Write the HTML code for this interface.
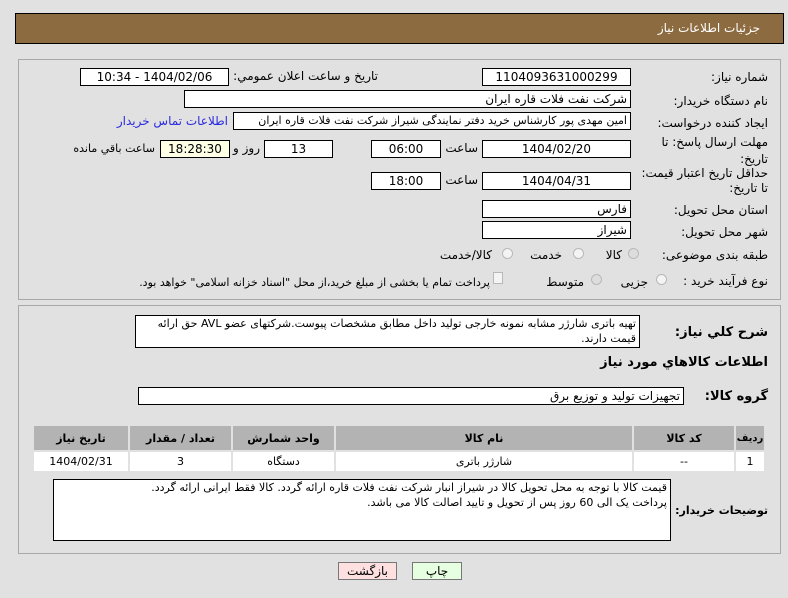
<!DOCTYPE html>
<html><head><meta charset="utf-8"><style>
body{margin:0;width:788px;height:598px;background:#e1e1e1;font-family:"DejaVu Sans","Noto Sans CJK SC",sans-serif;font-size:12px;color:#000;position:relative;overflow:hidden}
.a{position:absolute;white-space:nowrap}
.box{position:absolute;background:#fff;border:1px solid #000;box-sizing:border-box;height:18px;line-height:16px;text-align:center;font-size:12px;direction:rtl;overflow:hidden;white-space:nowrap}
.l{text-align:right;padding-right:3px}
.lab{position:absolute;direction:rtl;text-align:right;white-space:nowrap}
.panel{position:absolute;border:1px solid #a8a8a8;box-sizing:border-box;background:#e1e1e1}
.r{position:absolute;width:11px;height:11px;border-radius:50%;border:1px solid #b8b8b8;background:#f4f4f4;box-sizing:border-box}
table{position:absolute;border-collapse:collapse;left:32px;top:424px;width:734px}
td,th{border:2px solid #e1e1e1;text-align:center;font-size:11px;padding:0}
th{background:#b3b3b3;height:24px;font-weight:bold}
td{background:#fff;height:19px}
.s{font-size:11px}
</style></head><body>
<div class="a" style="left:15px;top:13px;width:769px;height:31px;background:#8d6b40;border:1px solid #000;box-sizing:border-box"></div>
<div class="lab" style="right:28px;top:21px;color:#fff">جزئیات اطلاعات نیاز</div>

<div class="panel" style="left:18px;top:59px;width:763px;height:241px"></div>
<div class="lab" style="right:20px;top:70px">شماره نیاز:</div>
<div class="box" style="left:482px;top:68px;width:149px">1104093631000299</div>
<div class="lab" style="right:410px;top:69px">تاریخ و ساعت اعلان عمومي:</div>
<div class="box" style="left:80px;top:68px;width:149px">1404/02/06 - 10:34</div>

<div class="lab" style="right:20px;top:94px">نام دستگاه خریدار:</div>
<div class="box l" style="left:184px;top:90px;width:447px">شرکت نفت فلات قاره ایران</div>

<div class="lab" style="right:20px;top:116px">ایجاد کننده درخواست:</div>
<div class="box l s" style="left:233px;top:112px;width:398px;letter-spacing:-0.3px">امین مهدی پور کارشناس خرید دفتر نمایندگی شیراز شرکت نفت فلات قاره ایران</div>
<div class="lab" style="right:560px;top:114px;color:#2a2ae0">اطلاعات تماس خریدار</div>

<div class="lab" style="right:20px;top:134px;line-height:17px">مهلت ارسال پاسخ: تا<br>تاریخ:</div>
<div class="box" style="left:482px;top:140px;width:149px">1404/02/20</div>
<div class="lab" style="right:310px;top:141px">ساعت</div>
<div class="box" style="left:371px;top:140px;width:70px">06:00</div>
<div class="box" style="left:264px;top:140px;width:69px">13</div>
<div class="lab" style="right:528px;top:141px">روز و</div>
<div class="box" style="left:160px;top:140px;width:70px;background:#ffffe6">18:28:30</div>
<div class="lab s" style="right:633px;top:142px">ساعت باقي مانده</div>

<div class="lab" style="right:20px;top:166px;line-height:15px;letter-spacing:-0.4px">حداقل تاریخ اعتبار قیمت:<br>تا تاریخ:</div>
<div class="box" style="left:482px;top:172px;width:149px">1404/04/31</div>
<div class="lab" style="right:310px;top:173px">ساعت</div>
<div class="box" style="left:371px;top:172px;width:70px">18:00</div>

<div class="lab" style="right:20px;top:203px">استان محل تحویل:</div>
<div class="box l" style="left:482px;top:200px;width:149px">فارس</div>
<div class="lab" style="right:20px;top:225px">شهر محل تحویل:</div>
<div class="box l" style="left:482px;top:221px;width:149px">شیراز</div>

<div class="lab" style="right:20px;top:248px">طبقه بندی موضوعی:</div>
<div class="r" style="left:628px;top:248px;background:#ddd"></div>
<div class="lab" style="right:166px;top:248px">کالا</div>
<div class="r" style="left:573px;top:248px"></div>
<div class="lab" style="right:226px;top:248px">خدمت</div>
<div class="r" style="left:502px;top:248px"></div>
<div class="lab" style="right:296px;top:248px">کالا/خدمت</div>

<div class="lab" style="right:20px;top:274px">نوع فرآیند خرید :</div>
<div class="r" style="left:656px;top:274px"></div>
<div class="lab" style="right:140px;top:275px">جزیی</div>
<div class="r" style="left:591px;top:274px;background:#ddd"></div>
<div class="lab" style="right:204px;top:275px">متوسط</div>
<div class="a" style="left:493px;top:272px;width:10px;height:12px;border:1px solid #b8b8b8;background:#f4f4f4;box-sizing:border-box"></div>
<div class="lab s" style="right:298px;top:276px">پرداخت تمام یا بخشی از مبلغ خرید،از محل "اسناد خزانه اسلامی" خواهد بود.</div>

<div class="panel" style="left:18px;top:305px;width:763px;height:249px"></div>
<div class="lab" style="right:20px;top:325px;font-weight:bold;font-size:13px">شرح کلي نیاز:</div>
<div class="box s" style="left:135px;top:315px;width:505px;height:33px;text-align:right;padding-right:3px;line-height:15px;white-space:normal">تهیه باتری شارژر مشابه نمونه خارجی تولید داخل مطابق مشخصات پیوست.شرکتهای عضو AVL حق ارائه قیمت دارند.</div>
<div class="lab" style="right:20px;top:355px;font-weight:bold;font-size:13px">اطلاعات کالاهاي مورد نیاز</div>
<div class="lab" style="right:20px;top:389px;font-weight:bold;font-size:13px">گروه کالا:</div>
<div class="box l" style="left:138px;top:387px;width:546px">تجهیزات تولید و توزیع برق</div>

<table dir="rtl"><tr><th style="width:28px;font-size:10px;letter-spacing:-0.5px">ردیف</th><th style="width:100px">کد کالا</th><th style="width:296px">نام کالا</th><th style="width:101px">واحد شمارش</th><th style="width:101px">تعداد / مقدار</th><th>تاریخ نیاز</th></tr>
<tr><td>1</td><td>--</td><td>شارژر باتری</td><td>دستگاه</td><td>3</td><td>1404/02/31</td></tr></table>

<div class="lab" style="right:20px;top:504px;font-weight:bold;font-size:11px;letter-spacing:-0.3px">توضیحات خریدار:</div>
<div class="box s" style="left:53px;top:479px;width:618px;height:62px;text-align:right;padding-right:3px;line-height:15px;white-space:normal">قیمت کالا با توجه به محل تحویل کالا در شیراز انبار شرکت نفت فلات قاره ارائه گردد. کالا فقط ایرانی ارائه گردد.<br>پرداخت  یک الی 60 روز پس از تحویل و تایید اصالت کالا می باشد.</div>

<div class="box" style="left:338px;top:562px;width:59px;height:18px;background:#ffe0e0;border-color:#777">بازگشت</div>
<div class="box" style="left:412px;top:562px;width:50px;height:18px;background:#e6ffe0;border-color:#777">چاپ</div>
</body></html>
